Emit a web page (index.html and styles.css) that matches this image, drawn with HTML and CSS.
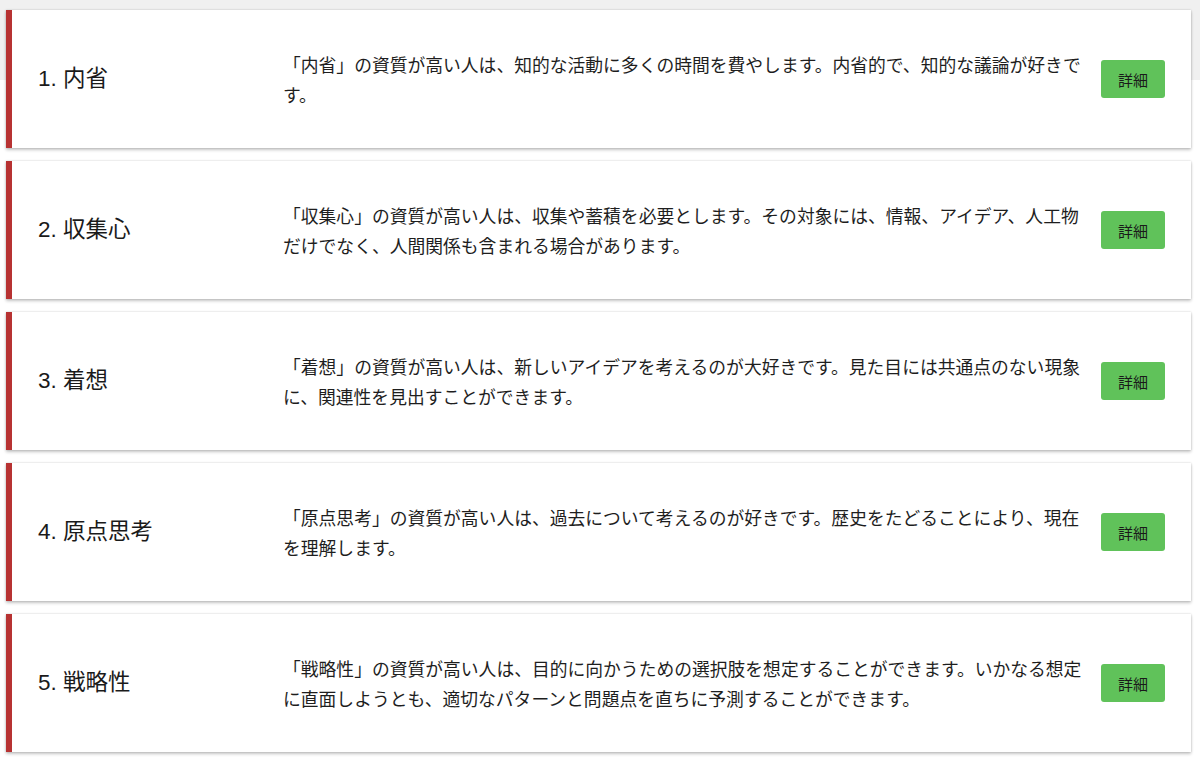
FILE: index.html
```html
<!DOCTYPE html>
<html lang="ja">
<head>
<meta charset="utf-8">
<title>資質一覧</title>
<link rel="stylesheet" href="styles.css">
</head>
<body>
<main class="list">
  <section class="card">
    <h2 class="card-title">1. 内省</h2>
    <p class="card-desc">「内省」の資質が高い人は、知的な活動に多くの時間を費やします。内省的で、知的な議論が好きです。</p>
    <button class="btn-detail">詳細</button>
  </section>
  <section class="card">
    <h2 class="card-title">2. 収集心</h2>
    <p class="card-desc">「収集心」の資質が高い人は、収集や蓄積を必要とします。その対象には、情報、アイデア、人工物だけでなく、人間関係も含まれる場合があります。</p>
    <button class="btn-detail">詳細</button>
  </section>
  <section class="card">
    <h2 class="card-title">3. 着想</h2>
    <p class="card-desc">「着想」の資質が高い人は、新しいアイデアを考えるのが大好きです。見た目には共通点のない現象に、関連性を見出すことができます。</p>
    <button class="btn-detail">詳細</button>
  </section>
  <section class="card">
    <h2 class="card-title">4. 原点思考</h2>
    <p class="card-desc">「原点思考」の資質が高い人は、過去について考えるのが好きです。歴史をたどることにより、現在を理解します。</p>
    <button class="btn-detail">詳細</button>
  </section>
  <section class="card">
    <h2 class="card-title">5. 戦略性</h2>
    <p class="card-desc">「戦略性」の資質が高い人は、目的に向かうための選択肢を想定することができます。いかなる想定に直面しようとも、適切なパターンと問題点を直ちに予測することができます。</p>
    <button class="btn-detail">詳細</button>
  </section>
</main>
</body>
</html>
```

FILE: styles.css
```css
html, body {
  margin: 0;
  padding: 0;
}

body {
  width: 1200px;
  height: 760px;
  overflow: hidden;
  background: linear-gradient(#f0f0f0 0, #f0f0f0 80px, #ffffff 80px);
  font-family: "Liberation Sans", "Noto Sans CJK JP", sans-serif;
  color: #222222;
}

.list {
  display: flex;
  flex-direction: column;
  gap: 13px;
  padding: 10px 9px 0 6px;
}

.card {
  display: grid;
  grid-template-columns: 229px 802px 64px;
  column-gap: 16px;
  align-items: center;
  height: 138px;
  box-sizing: border-box;
  padding: 0 26px;
  background: #ffffff;
  border-left: 6px solid #b73232;
  box-shadow: 0 2px 3px rgba(0, 0, 0, 0.22), 0 0 2px rgba(0, 0, 0, 0.18);
}

.card-title {
  margin: 0;
  font-size: 22.5px;
  font-weight: normal;
  line-height: 30px;
  color: #1a1a1a;
}

.card-desc {
  margin: 0;
  font-family: "Noto Sans CJK JP", sans-serif;
  font-size: 17.8px;
  line-height: 30px;
  color: #1e1e1e;
}

.btn-detail {
  width: 64px;
  height: 38px;
  padding: 0;
  border: none;
  border-radius: 3px;
  background: #60c25a;
  color: #1a1a1a;
  font-family: "Noto Sans CJK JP", sans-serif;
  font-size: 15px;
  cursor: pointer;
}
```
